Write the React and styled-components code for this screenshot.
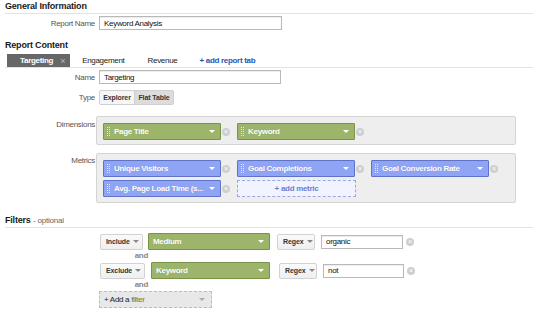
import React from "react";
import styled, { createGlobalStyle } from "styled-components";

const Global = createGlobalStyle`
  body {
    margin: 0;
    background: #fff;
    font-family: "Liberation Sans", Arial, sans-serif;
    font-size: 8px;
    letter-spacing: -0.3px;
    color: #222;
  }
`;

const Page = styled.div`
  width: 528px;
  padding: 0 7px 0 5px;
`;

const SectionTitle = styled.div`
  font-size: 9px;
  letter-spacing: -0.2px;
  font-weight: bold;
  line-height: 13px;
  color: #1a1a1a;
  border-bottom: 1px solid #e3e3e3;
  margin-top: ${(p) => p.top || 0}px;
  span {
    font-weight: normal;
    font-size: 8px;
    color: #666;
  }
`;

const SubTitle = styled.div`
  font-size: 9px;
  letter-spacing: -0.2px;
  font-weight: bold;
  line-height: 13px;
  margin-top: 9px;
  color: #1a1a1a;
`;

const Row = styled.div`
  display: grid;
  grid-template-columns: 90px 1fr;
  column-gap: 4px;
  align-items: ${(p) => p.align || "center"};
  margin-top: ${(p) => p.top || 0}px;
`;

const Label = styled.div`
  text-align: right;
  color: #555;
  padding-top: ${(p) => p.pad || 0}px;
`;

const Input = styled.div`
  box-sizing: border-box;
  width: ${(p) => p.w}px;
  height: ${(p) => p.h || 14}px;
  border: 1px solid #b9b9b9;
  box-shadow: inset 0 1px 1px rgba(0, 0, 0, 0.08);
  background: #fff;
  padding-left: 4px;
  display: flex;
  align-items: center;
  color: #111;
`;

const Tabs = styled.div`
  display: flex;
  align-items: stretch;
  height: 13px;
  margin-top: 2px;
  padding-left: 2px;
  border-bottom: 1px solid #e3e3e3;
`;

const Tab = styled.div`
  display: flex;
  align-items: center;
  padding: 0 ${(p) => (p.active ? 5 : 0)}px 0 ${(p) => (p.active ? 13 : 0)}px;
  margin-right: ${(p) => p.mr || 0}px;
  background: ${(p) => (p.active ? "#676767" : "transparent")};
  color: ${(p) => (p.active ? "#fff" : p.link ? "#2a55b8" : "#222")};
  font-weight: ${(p) => (p.active || p.link ? "bold" : "normal")};
  i {
    font-style: normal;
    color: #bdbdbd;
    margin-left: 7px;
    font-weight: normal;
    font-size: 9px;
  }
`;

const Toggle = styled.div`
  display: flex;
  height: 15px;
`;

const ToggleBtn = styled.div`
  box-sizing: border-box;
  width: ${(p) => p.w}px;
  display: flex;
  align-items: center;
  justify-content: center;
  border: 1px solid #cfcfcf;
  margin-left: ${(p) => (p.active ? -1 : 0)}px;
  background: ${(p) => (p.active ? "#dcdcdc" : "#f6f6f6")};
  border-radius: ${(p) => (p.active ? "0 2px 2px 0" : "2px 0 0 2px")};
  font-size: 7px;
  letter-spacing: -0.1px;
  font-weight: bold;
  color: #333;
`;

const Box = styled.div`
  margin-left: -3px;
  width: 420px;
  box-sizing: border-box;
  border: 1px solid #d4d4d4;
  border-radius: 2px;
  background: #eeeeee;
  padding: 6px 0 ${(p) => p.bottom || 4}px 6px;
  display: grid;
  grid-template-columns: repeat(3, 128px);
  column-gap: 6px;
  row-gap: 3px;
`;

const Group = styled.div`
  display: flex;
  align-items: center;
  gap: 1px;
`;

const Chip = styled.div`
  box-sizing: border-box;
  width: ${(p) => p.w || 118}px;
  height: 17px;
  border: 1px solid ${(p) => (p.blue ? "#5f74c9" : "#7a9447")};
  border-radius: 1px;
  background: ${(p) => (p.blue ? "#8fa4f5" : "#9db56b")};
  color: #fff;
  font-weight: bold;
  text-shadow: 0 0 1px rgba(0, 0, 0, 0.15);
  display: flex;
  align-items: center;
  padding: 0 5px 0 ${(p) => (p.plain ? 4 : 2)}px;
  white-space: nowrap;
`;

const ChipText = styled.span`
  flex: 1;
  overflow: hidden;
`;

const Caret = styled.span`
  width: 0;
  height: 0;
  border-left: 3px solid transparent;
  border-right: 3px solid transparent;
  border-top: 3px solid ${(p) => p.color || "#fff"};
  flex: none;
  margin-left: 3px;
`;

const Close = styled.span`
  width: 8px;
  height: 8px;
  border-radius: 50%;
  background: #cfcfcf;
  color: #fff;
  font-size: 7px;
  letter-spacing: 0;
  line-height: 8px;
  text-align: center;
  flex: none;
`;

const AddMetric = styled.div`
  box-sizing: border-box;
  width: 119px;
  height: 17px;
  border: 1px dashed #9aa7e0;
  background: #f1f4ff;
  color: #6b7fd0;
  font-weight: bold;
  display: flex;
  align-items: center;
  justify-content: center;
`;

const Filters = styled.div`
  padding-left: 95px;
  margin-top: 5px;
`;

const FilterRow = styled.div`
  display: flex;
  align-items: center;
  height: 17px;
`;

const Select = styled.div`
  box-sizing: border-box;
  width: ${(p) => p.w}px;
  height: 16px;
  margin-right: ${(p) => p.mr}px;
  border: 1px solid #d2d2d2;
  border-radius: 2px;
  background: linear-gradient(#fafafa, #efefef);
  display: flex;
  align-items: center;
  justify-content: space-between;
  padding: 0 5px 0 5px;
  font-size: 7px;
  letter-spacing: -0.1px;
  font-weight: bold;
  color: #333;
`;

const And = styled.div`
  width: ${(p) => p.w}px;
  text-align: right;
  height: 12px;
  line-height: 12px;
  color: #888;
  font-weight: bold;
`;

const AddFilter = styled.div`
  box-sizing: border-box;
  width: 113px;
  height: 17px;
  margin-left: -1px;
  border: 1px dashed #bdbdbd;
  background: #e8e8e8;
  display: flex;
  align-items: center;
  justify-content: space-between;
  padding: 0 6px 0 4px;
  color: #222;
  b {
    color: #5f7d30;
    font-weight: normal;
  }
`;

function Handle() {
  const dots = [];
  for (let r = 0; r < 5; r++) {
    dots.push(<rect key={"a" + r} x="0" y={r * 2} width="1" height="1" />);
    dots.push(<rect key={"b" + r} x="2" y={r * 2} width="1" height="1" />);
  }
  return (
    <svg width="3" height="9" fill="rgba(255,255,255,0.75)" style={{ marginRight: 4, marginLeft: 1, flex: "none" }}>
      {dots}
    </svg>
  );
}

function ChipItem({ name, blue, w }) {
  return (
    <Group>
      <Chip blue={blue} w={w}>
        <Handle />
        <ChipText>{name}</ChipText>
        <Caret />
      </Chip>
      <Close>×</Close>
    </Group>
  );
}

function Filter({ mode, w, mr, field, chipW, value, inputW, gap }) {
  return (
    <FilterRow>
      <Select w={w} mr={mr}>
        {mode} <Caret color="#888" />
      </Select>
      <Chip w={chipW} plain>
        <ChipText>{field}</ChipText>
        <Caret />
      </Chip>
      <Select w={38} mr={6} style={{ marginLeft: gap }}>
        Regex <Caret color="#888" />
      </Select>
      <Input w={inputW} h={14}>{value}</Input>
      <Close style={{ marginLeft: 3 }}>×</Close>
    </FilterRow>
  );
}

export default function App() {
  return (
    <Page>
      <Global />
      <SectionTitle>General Information</SectionTitle>
      <Row top={2}>
        <Label>Report Name</Label>
        <Input w={183}>Keyword Analysis</Input>
      </Row>

      <SubTitle>Report Content</SubTitle>
      <Tabs>
        <Tab active mr={12}>
          Targeting<i>×</i>
        </Tab>
        <Tab mr={23}>Engagement</Tab>
        <Tab mr={22}>Revenue</Tab>
        <Tab link>+ add report tab</Tab>
      </Tabs>

      <Row top={2}>
        <Label>Name</Label>
        <Input w={182}>Targeting</Input>
      </Row>

      <Row top={6}>
        <Label>Type</Label>
        <Toggle>
          <ToggleBtn w={36}>Explorer</ToggleBtn>
          <ToggleBtn w={40} active>
            Flat Table
          </ToggleBtn>
        </Toggle>
      </Row>

      <Row top={11} align="start">
        <Label pad={4}>Dimensions</Label>
        <Box>
          <ChipItem name="Page Title" />
          <ChipItem name="Keyword" />
        </Box>
      </Row>

      <Row top={8} align="start">
        <Label pad={3}>Metrics</Label>
        <Box bottom={5}>
          <ChipItem name="Unique Visitors" blue />
          <ChipItem name="Goal Completions" blue />
          <ChipItem name="Goal Conversion Rate" blue />
          <ChipItem name="Avg. Page Load Time (s..." blue />
          <AddMetric>+ add metric</AddMetric>
        </Box>
      </Row>

      <SectionTitle top={11}>
        Filters <span>- optional</span>
      </SectionTitle>
      <Filters>
        <Filter mode="Include" w={43} mr={5} field="Medium" chipW={122} value="organic" inputW={82} gap={7} />
        <And w={48}>and</And>
        <Filter mode="Exclude" w={45} mr={6} field="Keyword" chipW={119} value="not" inputW={81} gap={9} />
        <And w={48}>and</And>
        <AddFilter>
          <span>
            + Add a <b>filter</b>
          </span>
          <Caret color="#aaa" />
        </AddFilter>
      </Filters>
    </Page>
  );
}
